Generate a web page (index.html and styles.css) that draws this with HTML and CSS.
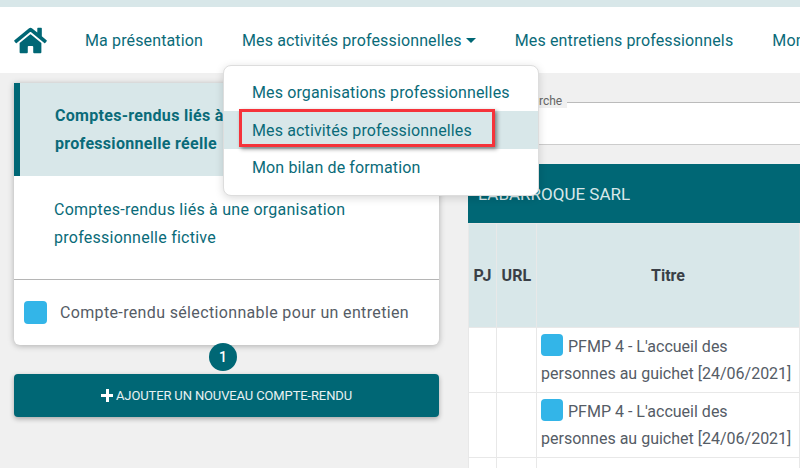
FILE: index.html
```html
<!DOCTYPE html>
<html lang="fr">
<head>
	<meta charset="utf-8">
	<title>Mes activités professionnelles</title>
	<link rel="stylesheet" href="styles.css">
</head>
<body>
	<div class="topband"></div>
	<nav class="nav">
		<svg class="home" viewBox="0 0 576 512"><path fill="currentColor" d="M280.37 148.26L96 300.11V464a16 16 0 0 0 16 16l112.06-.29a16 16 0 0 0 15.92-16V368a16 16 0 0 1 16-16h64a16 16 0 0 1 16 16v95.64a16 16 0 0 0 16 16.05L464 480a16 16 0 0 0 16-16V300L295.67 148.26a12.19 12.19 0 0 0-15.3 0zM571.6 251.47L488 182.56V44.05a12 12 0 0 0-12-12h-56a12 12 0 0 0-12 12v72.61L318.47 43a48 48 0 0 0-61 0L4.34 251.47a12 12 0 0 0-1.6 16.9l25.5 31A12 12 0 0 0 45.15 301l235.22-193.74a12.19 12.19 0 0 1 15.3 0L530.9 301a12 12 0 0 0 16.9-1.6l25.5-31a12 12 0 0 0-1.7-16.93z"/></svg>
		<a class="navlink">Ma présentation</a>
		<a class="navlink">Mes activités professionnelles<span class="caret"></span></a>
		<a class="navlink">Mes entretiens professionnels</a>
		<a class="navlink">Mon</a>
	</nav>

	<div class="dropdown">
		<a class="dditem first">Mes organisations professionnelles</a>
		<a class="dditem active">Mes activités professionnelles</a>
		<a class="dditem last">Mon bilan de formation</a>
	</div>
	<div class="redbox"></div>

	<main class="page">
		<section class="left">
			<div class="card">
				<div class="item selected">Comptes-rendus liés à une organisation<br>professionnelle réelle</div>
				<div class="item">Comptes-rendus liés à une organisation<br>professionnelle fictive</div>
				<div class="legend"><span class="bluebox"></span><span>Compte-rendu sélectionnable pour un entretien</span></div>
			</div>
			<div class="badge">1</div>
			<button class="addbtn"><span class="plus"></span>AJOUTER UN NOUVEAU COMPTE-RENDU</button>
		</section>
		<section class="right">
			<div class="search"><span class="searchlabel">Recherche</span></div>
			<div class="tablehead">LABARROQUE SARL</div>
			<table class="tbl">
				<tr class="heads"><th class="cpj">PJ</th><th class="curl">URL</th><th class="ctitre">Titre</th></tr>
				<tr class="row"><td></td><td></td><td><span class="bluebox small"></span>PFMP 4 - L'accueil des<br>personnes au guichet [24/06/2021]</td></tr>
				<tr class="row"><td></td><td></td><td><span class="bluebox small"></span>PFMP 4 - L'accueil des<br>personnes au guichet [24/06/2021]</td></tr>
				<tr class="row"><td></td><td></td><td></td></tr>
			</table>
		</section>
	</main>
</body>
</html>
```

FILE: styles.css
```css
* {
	box-sizing: border-box;
}
html, body {
	margin: 0;
	height: 468px;
	overflow: hidden;
}
body {
	position: relative;
	background: #f0f0f0;
	font-family: "Roboto", "Liberation Sans", sans-serif;
	font-size: 16px;
	color: #0a6b79;
}
.topband {
	height: 7px;
	background: #d8e7e9;
}
.nav {
	display: flex;
	align-items: center;
	height: 66px;
	padding-left: 14px;
	background: #fff;
	white-space: nowrap;
	overflow: hidden;
}
.home {
	flex: none;
	width: 33px;
	height: 29px;
	color: #006775;
	margin-right: 38px;
}
.navlink {
	flex: none;
	margin-right: 39px;
	letter-spacing: .13px;
}
.caret {
	display: inline-block;
	margin-left: 4px;
	vertical-align: 3px;
	border-top: 5px solid #006775;
	border-left: 5px solid transparent;
	border-right: 5px solid transparent;
}
.dropdown {
	position: absolute;
	left: 223px;
	top: 65px;
	width: 316px;
	height: 131px;
	background: #fff;
	border: 1px solid #ddd;
	border-radius: 8px;
	box-shadow: 0 2px 8px rgba(0,0,0,.15);
	z-index: 2;
}
.dditem {
	display: flex;
	align-items: center;
	padding-left: 28px;
	letter-spacing: .13px;
}
.first {
	height: 45px;
	padding-top: 8px;
}
.last {
	height: 46px;
	padding-bottom: 9px;
}
.active {
	height: 38px;
	background: #d8e7e9;
}
.redbox {
	position: absolute;
	left: 239px;
	top: 109px;
	width: 256px;
	height: 38px;
	border: 3px solid #f5333a;
	box-shadow: 2px 2px 4px rgba(0,0,0,.45);
	z-index: 3;
}
.page {
	display: grid;
	grid-template-columns: 425px 332px;
	column-gap: 29px;
	padding: 10px 0 0 14px;
}
.left {
	display: flex;
	flex-direction: column;
}
.card {
	background: #fff;
	border-radius: 0 0 6px 6px;
	box-shadow: 0 1px 6px rgba(0,0,0,.28);
	height: 262px;
}
.item {
	height: 103px;
	padding: 20px 0 0 40px;
	line-height: 28px;
	letter-spacing: .25px;
	white-space: nowrap;
}
.selected {
	height: 93px;
	padding: 19px 0 0 35px;
	background: #d8e7e9;
	border-left: 6px solid #006775;
	font-weight: 700;
	letter-spacing: .3px;
	overflow: hidden;
}
.legend {
	display: flex;
	align-items: center;
	height: 66px;
	padding-left: 10px;
	border-top: 1px solid #b5b5b5;
	color: #555c66;
	letter-spacing: .35px;
	white-space: nowrap;
}
.bluebox {
	width: 23px;
	height: 23px;
	margin-right: 13px;
	background: #33b5e8;
	border-radius: 4px;
}
.badge {
	width: 28px;
	height: 28px;
	margin: -2px 0 0 195px;
	border-radius: 50%;
	background: #006775;
	color: #fff;
	font-size: 14px;
	font-weight: 500;
	line-height: 28px;
	text-align: center;
}
.addbtn {
	display: flex;
	align-items: center;
	justify-content: center;
	height: 43px;
	margin-top: 3px;
	border: none;
	border-radius: 4px;
	background: #006775;
	color: #e8f2f3;
	font-family: inherit;
	font-size: 13px;
	letter-spacing: -.13px;
	box-shadow: 0 2px 5px rgba(0,0,0,.3);
}
.plus {
	width: 12px;
	height: 13px;
	margin-right: 3px;
	background: linear-gradient(#fff,#fff) center / 12px 3px no-repeat, linear-gradient(#fff,#fff) center / 3px 13px no-repeat;
}
.search {
	position: relative;
	height: 43px;
	margin-top: 19px;
	background: #fff;
	border-bottom: 1px solid #ccc;
	border-top: 1px solid #bbb;
}
.searchlabel {
	position: absolute;
	top: -9px;
	left: 38px;
	padding-right: 5px;
	background: #f0f0f0;
	color: #666;
	font-size: 12px;
	line-height: 14px;
}
.tablehead {
	display: flex;
	align-items: center;
	height: 59px;
	margin-top: 19px;
	padding-left: 10px;
	background: #006775;
	color: #d8e7e9;
	font-size: 17px;
}
.tbl {
	width: 100%;
	border-collapse: collapse;
	table-layout: fixed;
	background: #fff;
	color: #555c66;
}
.tbl td, .tbl th {
	border: 1px solid #e8e8e8;
	padding: 0 4px;
}
.heads {
	height: 104px;
	background: #d8e7e9;
	color: #3a3f46;
}
.tbl .cpj {
	width: 28px;
}
.tbl .curl {
	width: 40px;
	padding: 0 3px;
	letter-spacing: .1px;
}
.row {
	height: 65px;
	line-height: 27px;
	white-space: nowrap;
}
.bluebox.small {
	display: inline-block;
	vertical-align: -4px;
	width: 22px;
	height: 22px;
	margin-right: 5px;
}
```
